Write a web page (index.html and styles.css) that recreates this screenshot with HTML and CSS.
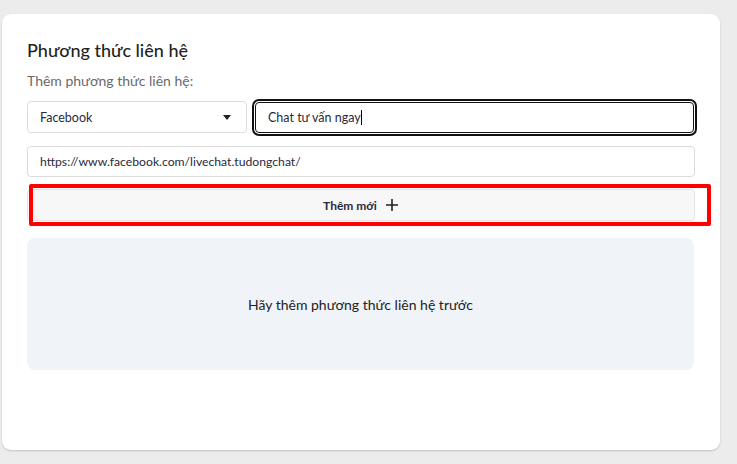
FILE: index.html
```html
<!DOCTYPE html>
<html lang="vi">
<head>
    <meta charset="UTF-8">
    <meta name="viewport" content="width=device-width, initial-scale=1.0">
    <title>Phương thức liên hệ</title>
    <link rel="stylesheet" href="styles.css">
</head>
<body>
    <section class="card">
        <h2 class="card-title">Phương thức liên hệ</h2>
        <p class="card-label">Thêm phương thức liên hệ:</p>
        <div class="row">
            <div class="select">
                <span>Facebook</span>
                <span class="caret"></span>
            </div>
            <div class="input focused">Chat tư vấn ngay<span class="cursor"></span></div>
        </div>
        <div class="input url">https://www.facebook.com/livechat.tudongchat/</div>
        <div class="add-wrap">
            <button class="add-btn">Thêm mới
                <svg width="14" height="14" viewBox="0 0 14 14"><path d="M7 1v12M1 7h12" stroke="#222" stroke-width="1.6" fill="none"/></svg>
            </button>
            <div class="highlight"></div>
        </div>
        <div class="empty">Hãy thêm phương thức liên hệ trước</div>
    </section>
</body>
</html>
```

FILE: styles.css
```css
* {
    margin: 0;
    padding: 0;
    box-sizing: border-box;
}
body {
    font-family: Lato, "Open Sans", sans-serif;
    background-color: #ececec;
    color: #222;
    padding: 14px 17px 14px 2px;
}
.card {
    background: #fff;
    border-radius: 9px;
    box-shadow: 0 1px 2px rgba(0, 0, 0, 0.18);
    height: 436px;
    padding: 24px 24px 0 25px;
}
.card-title {
    font-size: 18px;
    font-weight: 500;
    color: #1f1f1f;
    line-height: 24px;
}
.card-label {
    font-size: 14px;
    color: #6a6a6a;
    margin-top: 10px;
    line-height: 18px;
}
.row {
    display: flex;
    gap: 8px;
    margin-top: 11px;
    align-items: center;
}
.select {
    width: 220px;
    height: 32px;
    border: 1px solid #dcdcdc;
    border-radius: 4px;
    display: flex;
    align-items: center;
    justify-content: space-between;
    padding: 0 15px 0 12px;
    font-size: 12.5px;
    color: #2a2a3a;
}
.caret {
    width: 0;
    height: 0;
    border-left: 4px solid transparent;
    border-right: 4px solid transparent;
    border-top: 5px solid #222;
}
.input {
    height: 31px;
    border: 1px solid #dcdcdc;
    border-radius: 4px;
    display: flex;
    align-items: center;
    padding: 0 12px;
    font-size: 12.2px;
    color: #2a2a3a;
}
.focused {
    flex: 1;
    height: 31px;
    font-size: 12.5px;
    border: 1px solid #111;
    outline: 2px solid #111;
    outline-offset: 1px;
    margin-right: 2px;
}
.cursor {
    display: inline-block;
    width: 1px;
    height: 15px;
    background: #000;
}
.url {
    margin-top: 13px;
    margin-right: 1px;
}
.add-wrap {
    position: relative;
    margin-top: 12px;
    margin-right: 1px;
}
.add-btn {
    width: 100%;
    height: 32px;
    background: #f7f7f7;
    border: 1px solid #e4e4e4;
    border-radius: 4px;
    font-family: inherit;
    font-size: 12px;
    font-weight: 700;
    color: #2a2a3a;
    display: flex;
    align-items: center;
    justify-content: center;
    gap: 8px;
}
.highlight {
    position: absolute;
    left: 2px;
    top: -5px;
    right: -16px;
    bottom: -5px;
    border: 4px solid #ff0000;
    border-radius: 2px;
    pointer-events: none;
}
.empty {
    margin-top: 17px;
    margin-right: 2px;
    height: 132px;
    background: #f0f3f8;
    border-radius: 8px;
    display: flex;
    align-items: center;
    justify-content: center;
    font-size: 14px;
    color: #222;
}
```
